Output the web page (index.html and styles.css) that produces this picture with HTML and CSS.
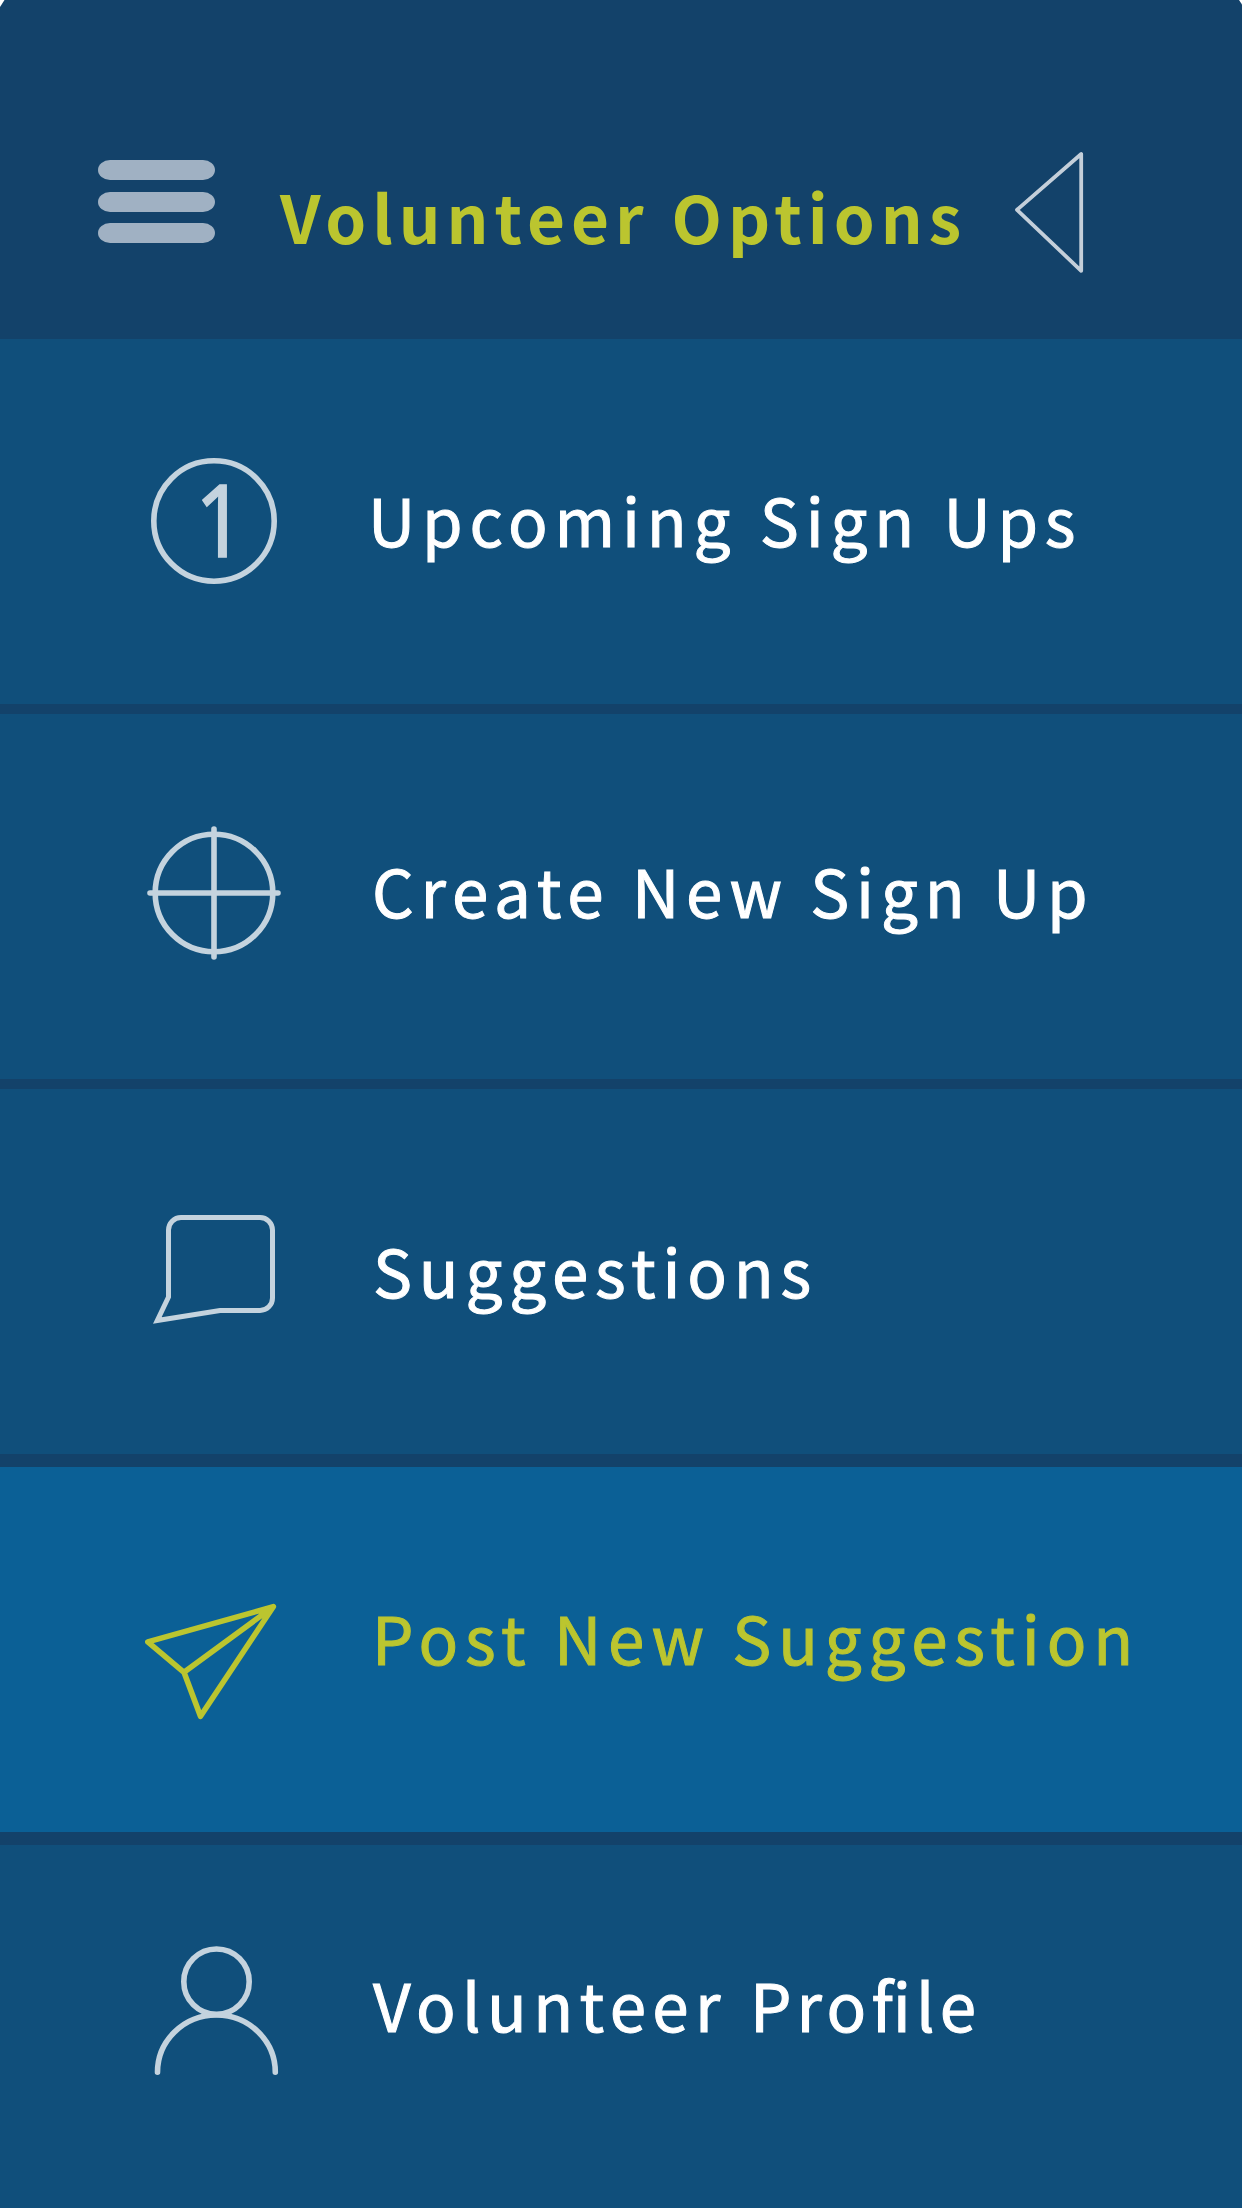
FILE: index.html
```
<!DOCTYPE html>
<html lang="en">
<head>
<meta charset="utf-8">
<title>Volunteer Options</title>
<link rel="stylesheet" href="styles.css">
</head>
<body>
<div class="screen">
  <header class="header">
    <div class="burger"><span class="bar"></span><span class="bar"></span><span class="bar"></span></div>
    <h1 class="title">Volunteer Options</h1>
    <svg class="back" viewBox="0 0 72 124" width="72" height="124">
      <path d="M68.2 4V120.8L4 59.8Z"/>
    </svg>
  </header>
  <nav class="menu">
    <a class="row row-upcoming">
      <svg class="icon" viewBox="0 0 340 365">
        <circle cx="214" cy="182" r="60.2"/>
        <text class="digit" transform="translate(195 218) scale(.87 1)">1</text>
      </svg>
      <span class="label">Upcoming Sign Ups</span>
    </a>
    <a class="row row-create">
      <svg class="icon" viewBox="0 0 340 365">
        <circle cx="214" cy="179" r="58.8"/>
        <path d="M150 179H278M214 115V243"/>
      </svg>
      <span class="label">Create New Sign Up</span>
    </a>
    <a class="row row-suggestions">
      <svg class="icon icon-bubble" viewBox="0 0 340 365">
        <path d="M181 128.5H260A12.5 12.5 0 0 1 272.5 141V209A12.5 12.5 0 0 1 260 221.5H220L157.3 231.5L168.5 208V141A12.5 12.5 0 0 1 181 128.5Z"/>
      </svg>
      <span class="label">Suggestions</span>
    </a>
    <a class="row row-post active">
      <svg class="icon" viewBox="0 0 340 365">
        <path d="M273.3 139.7L147.8 174.9L184 205.3L200.5 249.3ZM273.3 139.7L184 205.3"/>
      </svg>
      <span class="label">Post New Suggestion</span>
    </a>
    <a class="row row-profile">
      <svg class="icon" viewBox="0 0 340 365">
        <circle cx="216.5" cy="136.7" r="32.7"/>
        <path d="M157.5 227.3A58.9 57.3 0 0 1 275.3 227.3"/>
      </svg>
      <span class="label">Volunteer <span class="tight">Profile</span></span>
    </a>
  </nav>
</div>
</body>
</html>
```
FILE: styles.css
```
* { box-sizing: border-box; }

body {
  margin: 0;
  background: #fff;
  font-family: "Noto Sans CJK SC", "Noto Sans", sans-serif;
}

.screen {
  width: 1242px;
  height: 2208px;
  overflow: hidden;
  background: #13426a;
  clip-path: polygon(4.5px 0, 1239px 0, 100% 4.5px, 100% 100%, 0 100%, 0 7px);
}

.header {
  display: flex;
  align-items: flex-start;
  height: 339px;
  padding-left: 98px;
}

.burger {
  display: flex;
  flex-direction: column;
  gap: 11.6px;
  width: 117px;
  margin-top: 160px;
}

.bar {
  height: 20px;
  border-radius: 12px / 10px;
  background: #a0b1c3;
}

.title {
  width: 733px;
  margin: 176px 0 0 65px;
  font-size: 65.5px;
  font-weight: 700;
  line-height: 80px;
  letter-spacing: 6px;
  word-spacing: 1px;
  white-space: nowrap;
  color: #bbc52f;
}

.back {
  margin-top: 150px;
  fill: none;
  stroke: #c4cfda;
  stroke-width: 3.8;
  stroke-linejoin: round;
}

.menu {
  display: flex;
  flex-direction: column;
}

.row {
  display: flex;
  align-items: flex-start;
  height: 365px;
  background: #104f7b;
  color: #fff;
}

.icon {
  flex: none;
  width: 340px;
  height: 365px;
  fill: none;
  stroke: #c4d3de;
  stroke-width: 5.6;
  stroke-linecap: round;
  stroke-linejoin: round;
}

.icon-bubble {
  stroke-width: 5;
  stroke-linejoin: miter;
}

.digit {
  font-family: "Noto Sans", sans-serif;
  font-size: 101px;
  fill: #c4d3de;
  stroke-width: 1.6;
  stroke-linejoin: miter;
}

.label {
  font-size: 65.5px;
  font-weight: 400;
  line-height: 80px;
  letter-spacing: 6.8px;
  white-space: nowrap;
  font-feature-settings: "liga" 1;
  -webkit-text-stroke: 1px currentColor;
}

.row-upcoming { margin-bottom: 10px; }
.row-upcoming .label { margin: 140px 0 0 28px; word-spacing: 1px; }

.row-create { margin-bottom: 10px; }
.row-create .label { margin: 136px 0 0 32px; }

.row-suggestions { margin-bottom: 13px; }
.row-suggestions .label { margin: 141px 0 0 33px; }

.row-post { margin-bottom: 13px; }
.row-post .label { margin: 130px 0 0 32px; }

.row-profile .label { margin: 119px 0 0 33px; letter-spacing: 6.4px; word-spacing: 2px; }
.row-profile .tight { letter-spacing: 5.2px; }

.active { background: #0b6096; color: #bbc52f; }
.active .icon { stroke: #bbc52f; }
```
